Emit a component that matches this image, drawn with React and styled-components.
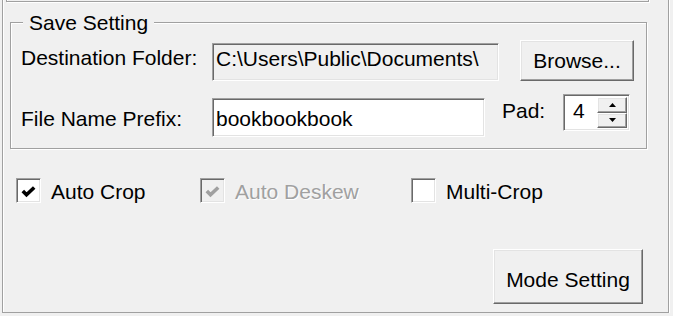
import React from "react";
import styled, { createGlobalStyle, css } from "styled-components";

const GlobalStyle = createGlobalStyle`
  html, body {
    margin: 0;
    padding: 0;
    background: #f0f0f0;
    overflow: hidden;
  }
  body {
    font-family: "Liberation Sans", Arial, sans-serif;
    font-size: 21px;
    color: #000;
  }
  * { box-sizing: border-box; }
`;

const etched = css`
  border: 1px solid #a0a0a0;
  box-shadow: inset 1px 1px 0 #fff, 1px 1px 0 #fff;
`;

const sunken = css`
  border: 1px solid;
  border-color: #a0a0a0 #fff #fff #a0a0a0;
  box-shadow: inset 1px 1px 0 #696969, inset -1px -1px 0 #e3e3e3;
`;

const raised = css`
  border: 1px solid;
  border-color: #fff #696969 #696969 #fff;
  box-shadow: inset -1px -1px 0 #a0a0a0, inset 1px 1px 0 #e3e3e3;
  background: #f0f0f0;
`;

const Frame = styled.div`
  ${etched};
  margin: -12px 0 0 2px;
  width: 667px;
  height: 325px;
  display: flex;
  flex-direction: column;
`;

const PrevGroup = styled.div`
  ${etched};
  margin-left: 3px;
  width: 643px;
  height: 13px;
`;

const Group = styled.div`
  ${etched};
  position: relative;
  margin: 20px 0 0 7px;
  width: 637px;
  padding: 17px 0 11px 10px;
  display: flex;
  flex-direction: column;
  gap: 13px;
`;

const Legend = styled.span`
  position: absolute;
  top: -12px;
  left: 12px;
  padding: 0 6px;
  line-height: 24px;
  background: #f0f0f0;
`;

const Row = styled.div`
  display: flex;
  align-items: flex-start;
`;

const Label = styled.span`
  width: ${(p) => p.$width}px;
  margin-top: ${(p) => p.$top}px;
  line-height: 24px;
  white-space: nowrap;
`;

const Field = styled.input`
  ${sunken};
  width: ${(p) => p.$width}px;
  height: ${(p) => p.$height}px;
  margin-top: ${(p) => p.$top}px;
  padding: ${(p) => p.$pad};
  background: ${(p) => (p.readOnly ? "#f0f0f0" : "#fff")};
  font: inherit;
  color: #000;
  outline: none;
`;

const Button = styled.button`
  ${raised};
  width: ${(p) => p.$width}px;
  height: ${(p) => p.$height}px;
  padding: ${(p) => p.$padTop || 0}px 0 0;
  font: inherit;
  color: #000;
  line-height: 24px;
`;

const Spin = styled.div`
  ${sunken};
  width: 67px;
  height: 37px;
  padding: 2px;
  display: flex;
  background: #fff;
`;

const SpinValue = styled.span`
  flex: 1;
  padding: 2px 0 0 7px;
  line-height: 24px;
`;

const SpinButtons = styled.div`
  width: 30px;
  display: flex;
  flex-direction: column;
`;

const SpinButton = styled.div`
  ${raised};
  flex: 1;
  display: flex;
  align-items: center;
  justify-content: center;
`;

const CheckRow = styled.div`
  display: flex;
  height: 25px;
  margin-top: 29px;
  padding-left: 13px;
`;

const CheckItem = styled.label`
  display: flex;
  align-items: flex-start;
  gap: 10px;
  width: ${(p) => (p.$width ? `${p.$width}px` : "auto")};
  color: ${(p) => (p.$disabled ? "#a0a0a0" : "#000")};
  text-shadow: ${(p) => (p.$disabled ? "1px 1px 0 #fff" : "none")};
`;

const Box = styled.span`
  ${sunken};
  width: 25px;
  height: 25px;
  flex: none;
  display: flex;
  align-items: center;
  justify-content: center;
  padding-top: 2px;
  background: ${(p) => (p.$disabled ? "#f0f0f0" : "#fff")};
`;

const CheckText = styled.span`
  margin-top: 2px;
  line-height: 24px;
  white-space: nowrap;
`;

const Footer = styled.div`
  display: flex;
  justify-content: flex-end;
  margin: 46px 25px 0 0;
`;

function Arrow({ down }) {
  return (
    <svg width="7" height="4" viewBox="0 0 7 4">
      <polygon points={down ? "0,0 7,0 3.5,4" : "3.5,0 7,4 0,4"} fill="#000" />
    </svg>
  );
}

function Check({ checked, disabled, width, children }) {
  return (
    <CheckItem $width={width} $disabled={disabled}>
      <Box $disabled={disabled}>
        {checked && (
          <svg width="15" height="12" viewBox="0 0 15 12">
            <polyline
              points="1.8,5 5.5,8.8 13.2,1.5"
              fill="none"
              stroke={disabled ? "#a0a0a0" : "#000"}
              strokeWidth="3.6"
            />
          </svg>
        )}
      </Box>
      <CheckText>{children}</CheckText>
    </CheckItem>
  );
}

export default function App() {
  return (
    <>
      <GlobalStyle />
      <Frame>
        <PrevGroup />
        <Group>
          <Legend>Save Setting</Legend>
          <Row>
            <Label $width={191} $top={6}>Destination Folder:</Label>
            <Field
              readOnly
              value={"C:\\Users\\Public\\Documents\\"}
              $width={287}
              $height={38}
              $top={3}
              $pad="0 3px 6px"
            />
            <Button $width={114} $height={41} style={{ marginLeft: 21 }}>
              Browse...
            </Button>
          </Row>
          <Row>
            <Label $width={191} $top={13}>File Name Prefix:</Label>
            <Field
              defaultValue="bookbookbook"
              $width={273}
              $height={39}
              $top={4}
              $pad="2px 3px 0"
            />
            <Label $width={61} $top={5} style={{ marginLeft: 17 }}>
              Pad:
            </Label>
            <Spin>
              <SpinValue>4</SpinValue>
              <SpinButtons>
                <SpinButton>
                  <Arrow />
                </SpinButton>
                <SpinButton>
                  <Arrow down />
                </SpinButton>
              </SpinButtons>
            </Spin>
          </Row>
        </Group>
        <CheckRow>
          <Check checked width={184}>Auto Crop</Check>
          <Check checked disabled width={211}>Auto Deskew</Check>
          <Check>Multi-Crop</Check>
        </CheckRow>
        <Footer>
          <Button $width={150} $height={55} $padTop={7}>
            Mode Setting
          </Button>
        </Footer>
      </Frame>
    </>
  );
}
